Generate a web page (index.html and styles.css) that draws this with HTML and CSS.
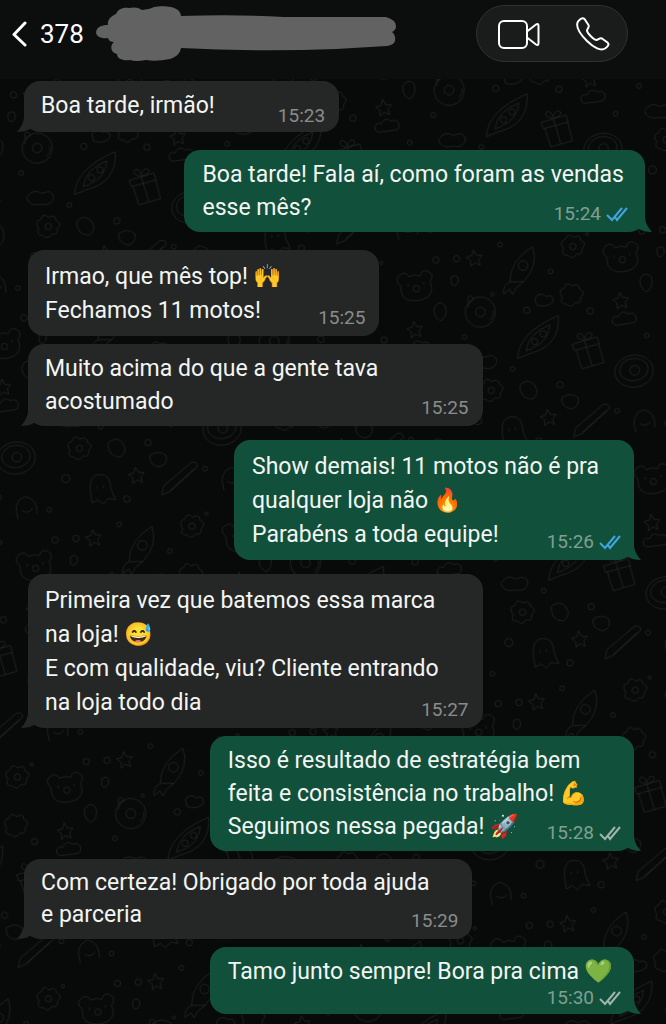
FILE: index.html
```html
<!DOCTYPE html>
<html lang="pt-BR">

<head>
  <meta charset="UTF-8">
  <meta name="viewport" content="width=device-width, initial-scale=1">
  <title>Conversa</title>
  <link rel="stylesheet" href="styles.css">
</head>

<body>
  <header class="topbar">
    <a href="#" class="back">
      <svg width="16" height="28" viewBox="0 0 16 28" aria-hidden="true"><path d="M13 3 2 14.500 13 25" /></svg>
      <span>378</span>
    </a>
    <!-- nome riscado -->
    <svg class="scribble" viewBox="0 0 300 56" aria-hidden="true">
      <path d="M0 26C1 21 5 19 12 19C11 14 15 10 20 8C22 3 27 1 33 2C38 1 42 1 46 4C51 3 54 3 58 1C63 0 70 0 75 1C80 2 85 5 85 10Q140 8 188 11L290 11Q300 14 300 20Q300 24 296 26Q300 29 299 35Q298 39 291 40L240 43Q160 46 85 42C84 48 80 51 74 53Q60 56 50 54Q40 56 34 54C27 55 21 53 21 48C14 46 14 39 18 36C15 36 13 35 12 32C6 33 0 31 0 26Z" />
    </svg>
    <div class="actions">
      <button type="button" aria-label="Chamada de vídeo">
        <svg width="44" height="32" viewBox="0 0 44 32" aria-hidden="true"><rect x="2" y="3" width="28" height="27" rx="5" /><path d="M30 13.500 39 6.500Q41.500 5 41.500 8V25Q41.500 28 39 26.500L30 19.500" /></svg>
      </button>
      <button type="button" aria-label="Ligar">
        <svg width="36" height="36" viewBox="0 0 36 36" aria-hidden="true"><path d="M3 5.500C5 3 7.500 1 9.500 3L13.500 9C14.500 11 12.500 12.500 12 14.500C12 17 19 24 21.500 24C23.500 23.500 25 21.500 27 22.500L32.500 26.500C35 28.500 32 31 30 32.500C26 35 19 32 12 25C4 17 .5 10 3 5.500Z" /></svg>
      </button>
    </div>
  </header>

  <main class="chat">
    <svg class="doodles" width="100%" height="100%" aria-hidden="true">
      <defs>
        <pattern id="doodle" width="260" height="280" patternUnits="userSpaceOnUse" patternTransform="rotate(-8) scale(.8)">
          <circle cx="14" cy="22" r="4" /><circle cx="70" cy="12" r="3" /><circle cx="128" cy="54" r="3" /><circle cx="248" cy="20" r="4" />
          <circle cx="92" cy="98" r="4" /><circle cx="10" cy="120" r="3" /><circle cx="170" cy="110" r="4" /><circle cx="236" cy="150" r="3" />
          <circle cx="64" cy="168" r="3" /><circle cx="120" cy="196" r="4" /><circle cx="12" cy="226" r="5" /><circle cx="186" cy="238" r="3" />
          <circle cx="84" cy="262" r="4" /><circle cx="246" cy="262" r="3" /><circle cx="180" cy="14" r="2" /><circle cx="52" cy="72" r="2" />
          <path d="M36 14l3 7 7 1-5 5 1 7-6-4-6 4 1-7-5-5 7-1z" />
          <path d="M210 92l3 7 7 1-5 5 1 7-6-4-6 4 1-7-5-5 7-1z" />
          <path d="M100 224l3 7 7 1-5 5 1 7-6-4-6 4 1-7-5-5 7-1z" />
          <!-- planeta -->
          <circle cx="34" cy="92" r="19" /><circle cx="34" cy="92" r="6" /><path d="M19 85q3-9 10-10M44 104q7-5 6-12M21 78q-1-7 3-8l4 3" />
          <!-- foguete -->
          <path d="M76 60q3-26 34-40q5 24-17 42zM76 60q-10 3-10 14l8-5 3 7 6-8 10-6" /><circle cx="95" cy="42" r="6" />
          <!-- flores -->
          <path d="M148 28q-5-10 4-11 4-9 10-1 9-4 9 5 8 5 0 10 0 9-8 6-6 7-11 0-9-1-4-9z" /><circle cx="160" cy="27" r="4" />
          <path d="M22 192q-5-10 4-11 4-9 10-1 9-4 9 5 8 5 0 10 0 9-8 6-6 7-11 0-9-1-4-9z" /><circle cx="34" cy="191" r="4" />
          <path d="M138 88q-5-10 4-11 4-9 10-1 9-4 9 5 8 5 0 10 0 9-8 6-6 7-11 0-9-1-4-9z" />
          <!-- barco -->
          <path d="M72 156q6-32 58-46q-3 38-42 42zM84 148q6-22 34-28-4 20-26 26z" /><circle cx="96" cy="138" r="4" /><circle cx="108" cy="130" r="4" />
          <!-- urso -->
          <path d="M200 46q-8-9 1-14 8-4 11 4 8-3 14 1 3-9 11-4 7 5 0 13 5 20-18 21-23 0-19-21z" /><circle cx="219" cy="52" r="4" /><path d="M209 45v3M229 45v3" />
          <!-- presente -->
          <path d="M142 148l32-5 2 9-32 4zM146 156l4 24 28-4-3-24M158 146l5 32M157 145q-11-4-6-9 6-2 7 8 4-11 10-6 2 5-9 7" />
          <!-- nuvem -->
          <path d="M202 132q-8 0-6-8 3-5 8-2 5-9 13-2 9-2 9 6 0 7-8 6z" />
          <!-- rosquinha -->
          <ellipse cx="214" cy="192" rx="24" ry="20" /><ellipse cx="214" cy="190" rx="18" ry="14" /><circle cx="215" cy="191" r="6" />
          <!-- lápis -->
          <path d="M132 252l38-24q8-1 7 6l-38 26-11 3zM139 259l34-23" />
          <!-- fantasma -->
          <path d="M40 246q1-20 14-19 14 0 12 20l4 14-9-3-7 6-6-6-8 3zM49 241v3M57 241v3" />
          <path d="M206 268q-5-22 12-27 16 5 12 24M212 258q8 6 14-1M4 44q10-5 8 7-7 8-9 0zM104 84q8-7 14 0 10-2 8 8-10 7-21 1z" />
          <path d="M12 152q9-12 20-3 13-5 14 7-5 11-17 6-14 2-17-10zM70 190q10-9 18 1 7 12-5 18-15-3-13-19zM238 78q8-9 14 1 1 14-9 17-9-7-5-18zM120 212q12-6 20 3 1 11-10 13-13-4-10-16z" />
        </pattern>
      </defs>
      <rect width="100%" height="100%" fill="url(#doodle)" />
    </svg>

    <!-- o visto usado nas mensagens enviadas -->
    <svg class="hidden" aria-hidden="true">
      <symbol id="ticks" viewBox="0 0 23 16"><path d="M1 9 6 14 16 2M9 11 11 14 21 2" /></symbol>
    </svg>

    <ol class="messages">
      <li class="msg in tail edge stacked w52">
        <p>Boa tarde, irmão!</p>
        <div class="meta"><time>15:23</time></div>
      </li>
      <li class="msg out tail edge w76 turn">
        <p>Boa tarde! Fala aí, como foram as vendas<br>esse mês?</p>
        <div class="meta"><time>15:24</time><svg class="ticks read"><use href="#ticks" /></svg></div>
      </li>
      <li class="msg in loose w58 turn">
        <p>Irmao, que mês top! 🙌<br>Fechamos 11 motos!</p>
        <div class="meta"><time>15:25</time></div>
      </li>
      <li class="msg in tail w75">
        <p>Muito acima do que a gente tava<br>acostumado</p>
        <div class="meta"><time>15:25</time></div>
      </li>
      <li class="msg out tail loose w66 near">
        <p>Show demais! 11 motos não é pra<br>qualquer loja não 🔥<br>Parabéns a toda equipe!</p>
        <div class="meta"><time>15:26</time><svg class="ticks read"><use href="#ticks" /></svg></div>
      </li>
      <li class="msg in tail loose w75 near">
        <p>Primeira vez que batemos essa marca<br>na loja! 😅<br>E com qualidade, viu? Cliente entrando<br>na loja todo dia</p>
        <div class="meta"><time>15:27</time></div>
      </li>
      <li class="msg out tail w70">
        <p>Isso é resultado de estratégia bem<br>feita e consistência no trabalho! 💪<br>Seguimos nessa pegada! 🚀</p>
        <div class="meta"><time>15:28</time><svg class="ticks"><use href="#ticks" /></svg></div>
      </li>
      <li class="msg in tail edge tight w74">
        <p>Com certeza! Obrigado por toda ajuda<br>e parceria</p>
        <div class="meta"><time>15:29</time></div>
      </li>
      <li class="msg out tail stacked last w70">
        <p>Tamo junto sempre! Bora pra cima 💚</p>
        <div class="meta"><time>15:30</time><svg class="ticks"><use href="#ticks" /></svg></div>
      </li>
    </ol>
  </main>
</body>

</html>
```
FILE: styles.css
```css
* {
  margin: 0;
  padding: 0;
  box-sizing: border-box;
}

body {
  min-height: 100vh;
  display: flex;
  flex-direction: column;
  background: #080909;
  color: #f3f5f4;
  font-family: Roboto, "Noto Color Emoji", sans-serif;
}

ol {
  list-style: none;
}

button {
  display: flex;
  border: 0;
  background: none;
  cursor: pointer;
}

/* topo */
.topbar {
  display: flex;
  align-items: center;
  padding: 5px 38px 17px 12px;
  background: #0c0d0d;
}

.back {
  display: flex;
  align-items: center;
  gap: 12px;
  color: #fff;
  font-size: 26px;
  line-height: 32px;
  text-decoration: none;
}

.back svg,
.actions svg {
  fill: none;
  stroke: #fff;
  stroke-width: 2;
  stroke-linecap: round;
  stroke-linejoin: round;
}

.back svg {
  stroke-width: 3;
}

.scribble {
  width: 300px;
  min-width: 0;
  margin-left: 12px;
  fill: #626262;
}

.actions {
  display: flex;
  align-items: center;
  gap: 34px;
  height: 57px;
  margin-left: auto;
  padding: 0 16px 0 20px;
  border: 1px solid #2f3130;
  border-radius: 29px;
  background: #1a1b1b;
}

/* conversa */
.chat {
  flex: 1;
  position: relative;
  padding: 2px 32px 12px 28px;
}

.doodles {
  position: absolute;
  top: 0;
  left: 0;
}

.doodles pattern {
  fill: none;
  stroke: #222423;
  stroke-width: 1;
}

.hidden {
  position: absolute;
  width: 0;
  height: 0;
}

.messages {
  position: relative;
  display: flex;
  flex-direction: column;
  gap: 8px;
}

.msg {
  position: relative;
  display: grid;
  padding: 8px 14px 8px 17px;
  border-radius: 16px;
  font-size: 23px;
  line-height: 33px;
}

.msg p,
.meta {
  grid-area: 1 / 1;
}

.msg p {
  white-space: nowrap;
}

.in {
  align-self: flex-start;
  background: #252726;
}

.out {
  align-self: flex-end;
  padding-right: 12px;
  padding-left: 18px;
  background: #11503a;
}

.in.edge {
  margin-left: -4px;
}

.out.edge {
  margin-right: -11px;
  padding-right: 16px;
}

.tight {
  line-height: 32px;
}

.loose {
  padding-top: 10px;
  line-height: 34px;
}

.near {
  margin-top: 6px;
}

.turn {
  margin-top: 10px;
}

/* hora abaixo do texto */
.stacked {
  padding-bottom: 6px;
}

.stacked p {
  padding-bottom: 4px;
}

.last p {
  padding-bottom: 20px;
}

.w52 { width: 52%; }
.w58 { width: 58%; }
.w66 { width: 66%; }
.w70 { width: 70%; }
.w74 { width: 74%; }
.w75 { width: 75%; }
.w76 { width: 76%; }

.meta {
  align-self: end;
  justify-self: end;
  display: flex;
  align-items: center;
  gap: 5px;
  color: #8a8c8b;
  font-size: 19px;
  line-height: 20px;
}

.out .meta {
  color: #809f93;
}

.ticks {
  width: 23px;
  height: 16px;
  fill: none;
  stroke: #a0b5ad;
  stroke-width: 2;
}

.ticks.read {
  stroke: #41a6df;
}

/* pontinha do balão */
.tail::after {
  content: "";
  position: absolute;
  bottom: 0;
  width: 24px;
  height: 16px;
  background: inherit;
  clip-path: path("M7 0C7 7 4 11 0 16C5 16 10 15 13 13L24 16V0Z");
}

.in.tail::after {
  left: -7px;
}

.out.tail::after {
  right: -7px;
  transform: scaleX(-1);
}
```
